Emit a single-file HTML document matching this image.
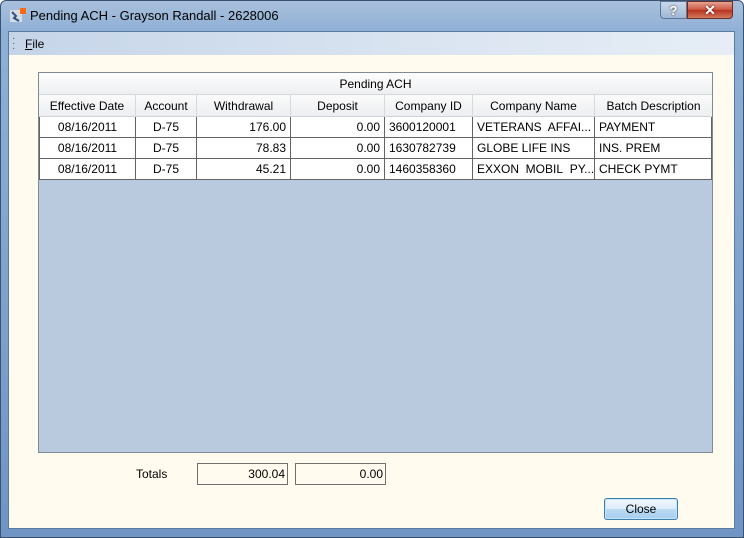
<!DOCTYPE html>
<html><head><meta charset="utf-8"><style>
*{margin:0;padding:0;box-sizing:border-box}
body{width:744px;height:538px;overflow:hidden;font-family:"Liberation Sans",sans-serif;font-size:12px;color:#000;background:#fff}
.win{position:absolute;left:0;top:0;width:744px;height:538px;border-radius:6px 6px 0 0;background:linear-gradient(180deg,#a9c0dc 0,#8fb0d6 30px,#6f95c4 100%);border:1px solid #3a5270}
.title{position:absolute;left:29px;top:7px;font-size:13px;color:#000}
.client{position:absolute;left:7px;top:30px;width:727px;height:498px;border:1px solid #5a7aa0;background:#fffbef}
.menu{position:absolute;left:0;top:0;width:725px;height:23px;background:linear-gradient(90deg,#c5d5e8,#dbe5f1 60%,#e6edf6)}
.grid{position:absolute;left:29px;top:40px;width:675px;height:381px;border:1px solid #7f8a96;background:#b9cadf}
.cap{position:absolute;left:0;top:0;width:673px;height:22px;background:linear-gradient(#fdfdfd,#eeeff1);border-bottom:1px solid #d5d8dc;text-align:center;line-height:22px}
.hdr{position:absolute;top:22px;height:22px;line-height:22px;text-align:center;background:linear-gradient(#fbfbfb,#eceef1);border-right:1px solid #d5d8dc;border-bottom:1px solid #d0d3d7}
.c{position:absolute;height:21px;line-height:21px;background:#fff;border-right:1px solid #646464;border-bottom:1px solid #646464;padding:0 4px;white-space:nowrap;overflow:hidden}
.r{text-align:right}.m{text-align:center}
.box{position:absolute;top:431px;width:91px;height:22px;border:1px solid #6f6f6f;text-align:right;line-height:20px;padding-right:2px;background:#fffbef}
.btn{position:absolute;left:595px;top:466px;width:74px;height:22px;border:1px solid #3c7fb1;border-radius:3px;background:linear-gradient(#f2f8fd 0,#dcecf9 50%,#bcdaf2 51%,#a7cdee 100%);text-align:center;line-height:20px;box-shadow:inset 0 0 0 1px #c8e4f8}
</style></head><body>
<div class="win">
 <svg style="position:absolute;left:9px;top:7px" width="16" height="16"><rect x="0" y="2" width="12" height="12" fill="#d7dbe2"/><path d="M2 4l4 4-2 2 5 3" stroke="#2d4f8a" stroke-width="2" fill="none"/><rect x="10" y="0" width="6" height="6" fill="#ff6a10"/></svg>
 <div class="title">Pending ACH - Grayson Randall - 2628006</div>
 <div style="position:absolute;left:659px;top:0px;width:27px;height:18px;border:1px solid #5d7594;border-radius:0 0 0 4px;background:linear-gradient(#c9d8ea,#9fb8d6);text-align:center;color:#fff;font-weight:bold;font-size:13px;line-height:17px;text-shadow:0 0 2px #333">?</div>
 <div style="position:absolute;left:686px;top:0px;width:46px;height:18px;border:1px solid #6b2d26;border-radius:0 0 4px 0;background:linear-gradient(#e8a493,#c9523d 50%,#b8321f 51%,#d07a5c);text-align:center;color:#fff;font-weight:bold;font-size:14px;line-height:17px;text-shadow:0 0 2px #400">✕</div>
 <div class="client">
  <div class="menu"><span style="position:absolute;left:3px;top:4px;color:#555;font-size:10px;line-height:5px">·<br>·<br>·</span><span style="position:absolute;left:16px;top:5px"><u>F</u>ile</span></div>
  <div class="grid">
   <div class="cap">Pending ACH</div>
   <div class="hdr" style="left:0;width:97px">Effective Date</div>
   <div class="hdr" style="left:97px;width:61px">Account</div>
   <div class="hdr" style="left:158px;width:94px">Withdrawal</div>
   <div class="hdr" style="left:252px;width:94px">Deposit</div>
   <div class="hdr" style="left:346px;width:88px">Company ID</div>
   <div class="hdr" style="left:434px;width:122px">Company Name</div>
   <div class="hdr" style="left:556px;width:117px;border-right:none">Batch Description</div>
   <div class="c m" style="left:0;top:44px;width:97px;border-left:1px solid #646464">08/16/2011</div><div class="c m" style="left:97px;top:44px;width:61px">D-75</div><div class="c r" style="left:158px;top:44px;width:94px">176.00</div><div class="c r" style="left:252px;top:44px;width:94px">0.00</div><div class="c" style="left:346px;top:44px;width:88px">3600120001</div><div class="c" style="left:434px;top:44px;width:122px">VETERANS&nbsp; AFFAI...</div><div class="c" style="left:556px;top:44px;width:117px">PAYMENT</div>
   <div class="c m" style="left:0;top:65px;width:97px;border-left:1px solid #646464">08/16/2011</div><div class="c m" style="left:97px;top:65px;width:61px">D-75</div><div class="c r" style="left:158px;top:65px;width:94px">78.83</div><div class="c r" style="left:252px;top:65px;width:94px">0.00</div><div class="c" style="left:346px;top:65px;width:88px">1630782739</div><div class="c" style="left:434px;top:65px;width:122px">GLOBE LIFE INS</div><div class="c" style="left:556px;top:65px;width:117px">INS. PREM</div>
   <div class="c m" style="left:0;top:86px;width:97px;border-left:1px solid #646464">08/16/2011</div><div class="c m" style="left:97px;top:86px;width:61px">D-75</div><div class="c r" style="left:158px;top:86px;width:94px">45.21</div><div class="c r" style="left:252px;top:86px;width:94px">0.00</div><div class="c" style="left:346px;top:86px;width:88px">1460358360</div><div class="c" style="left:434px;top:86px;width:122px">EXXON&nbsp; MOBIL&nbsp; PY...</div><div class="c" style="left:556px;top:86px;width:117px">CHECK PYMT</div>
  </div>
  <div style="position:absolute;left:127px;top:435px">Totals</div>
  <div class="box" style="left:188px">300.04</div>
  <div class="box" style="left:286px">0.00</div>
  <div class="btn">Close</div>
 </div>
</div>
</body></html>
